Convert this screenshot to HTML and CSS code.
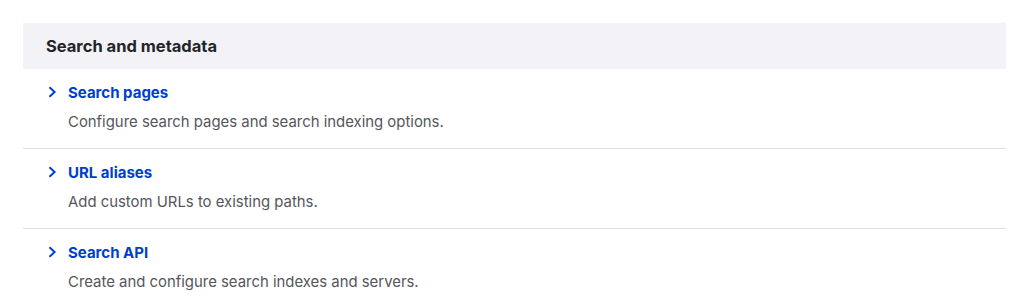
FILE: index.html
```html
<!DOCTYPE html>
<html lang="en">
<head>
  <meta charset="UTF-8" />
  <title>Configuration</title>
  <link rel="stylesheet" href="styles.css">
</head>
<body>

  <div class="panel">
    <h2 class="panel-title">Search and metadata</h2>
    <ul class="admin-list">
      <li>
        <a href="#" class="admin-link">
          <svg class="chevron" width="9" height="12" viewBox="0 0 9 12"><path d="M1.5 1.2 L6.6 6 L1.5 10.8" fill="none" stroke="#003ecc" stroke-width="2"/></svg>
          Search pages
        </a>
        <p class="admin-desc">Configure search pages and search indexing options.</p>
      </li>
      <li>
        <a href="#" class="admin-link">
          <svg class="chevron" width="9" height="12" viewBox="0 0 9 12"><path d="M1.5 1.2 L6.6 6 L1.5 10.8" fill="none" stroke="#003ecc" stroke-width="2"/></svg>
          URL aliases
        </a>
        <p class="admin-desc">Add custom URLs to existing paths.</p>
      </li>
      <li>
        <a href="#" class="admin-link">
          <svg class="chevron" width="9" height="12" viewBox="0 0 9 12"><path d="M1.5 1.2 L6.6 6 L1.5 10.8" fill="none" stroke="#003ecc" stroke-width="2"/></svg>
          Search API
        </a>
        <p class="admin-desc">Create and configure search indexes and servers.</p>
      </li>
    </ul>
  </div>

</body>
</html>
```

FILE: styles.css
```css
body {
  margin: 0;
  padding: 23px 18px 0 23px;
  font-family: Inter, "Noto Sans", sans-serif;
  background: #fff;
  color: #232429;
}

.panel-title {
  margin: 0;
  height: 46px;
  display: flex;
  align-items: center;
  padding: 0 23px;
  background-color: #f2f2f7;
  font-size: 16.5px;
  font-weight: 700;
  color: #232429;
}

.admin-list {
  list-style: none;
  margin: 0;
  padding: 0;
}

.admin-list li {
  padding: 13px 0 16px 25px;
  border-bottom: 1px solid #dedfe4;
}

.admin-list li:last-child {
  border-bottom: none;
}

.admin-link {
  display: flex;
  align-items: center;
  gap: 11px;
  height: 20px;
  text-decoration: none;
  color: #003ecc;
  font-weight: 700;
  font-size: 15px;
}

.chevron {
  flex: none;
}

.admin-desc {
  margin: 10px 0 0 20px;
  line-height: 20px;
  font-size: 14.9px;
  color: #55565b;
}
```
